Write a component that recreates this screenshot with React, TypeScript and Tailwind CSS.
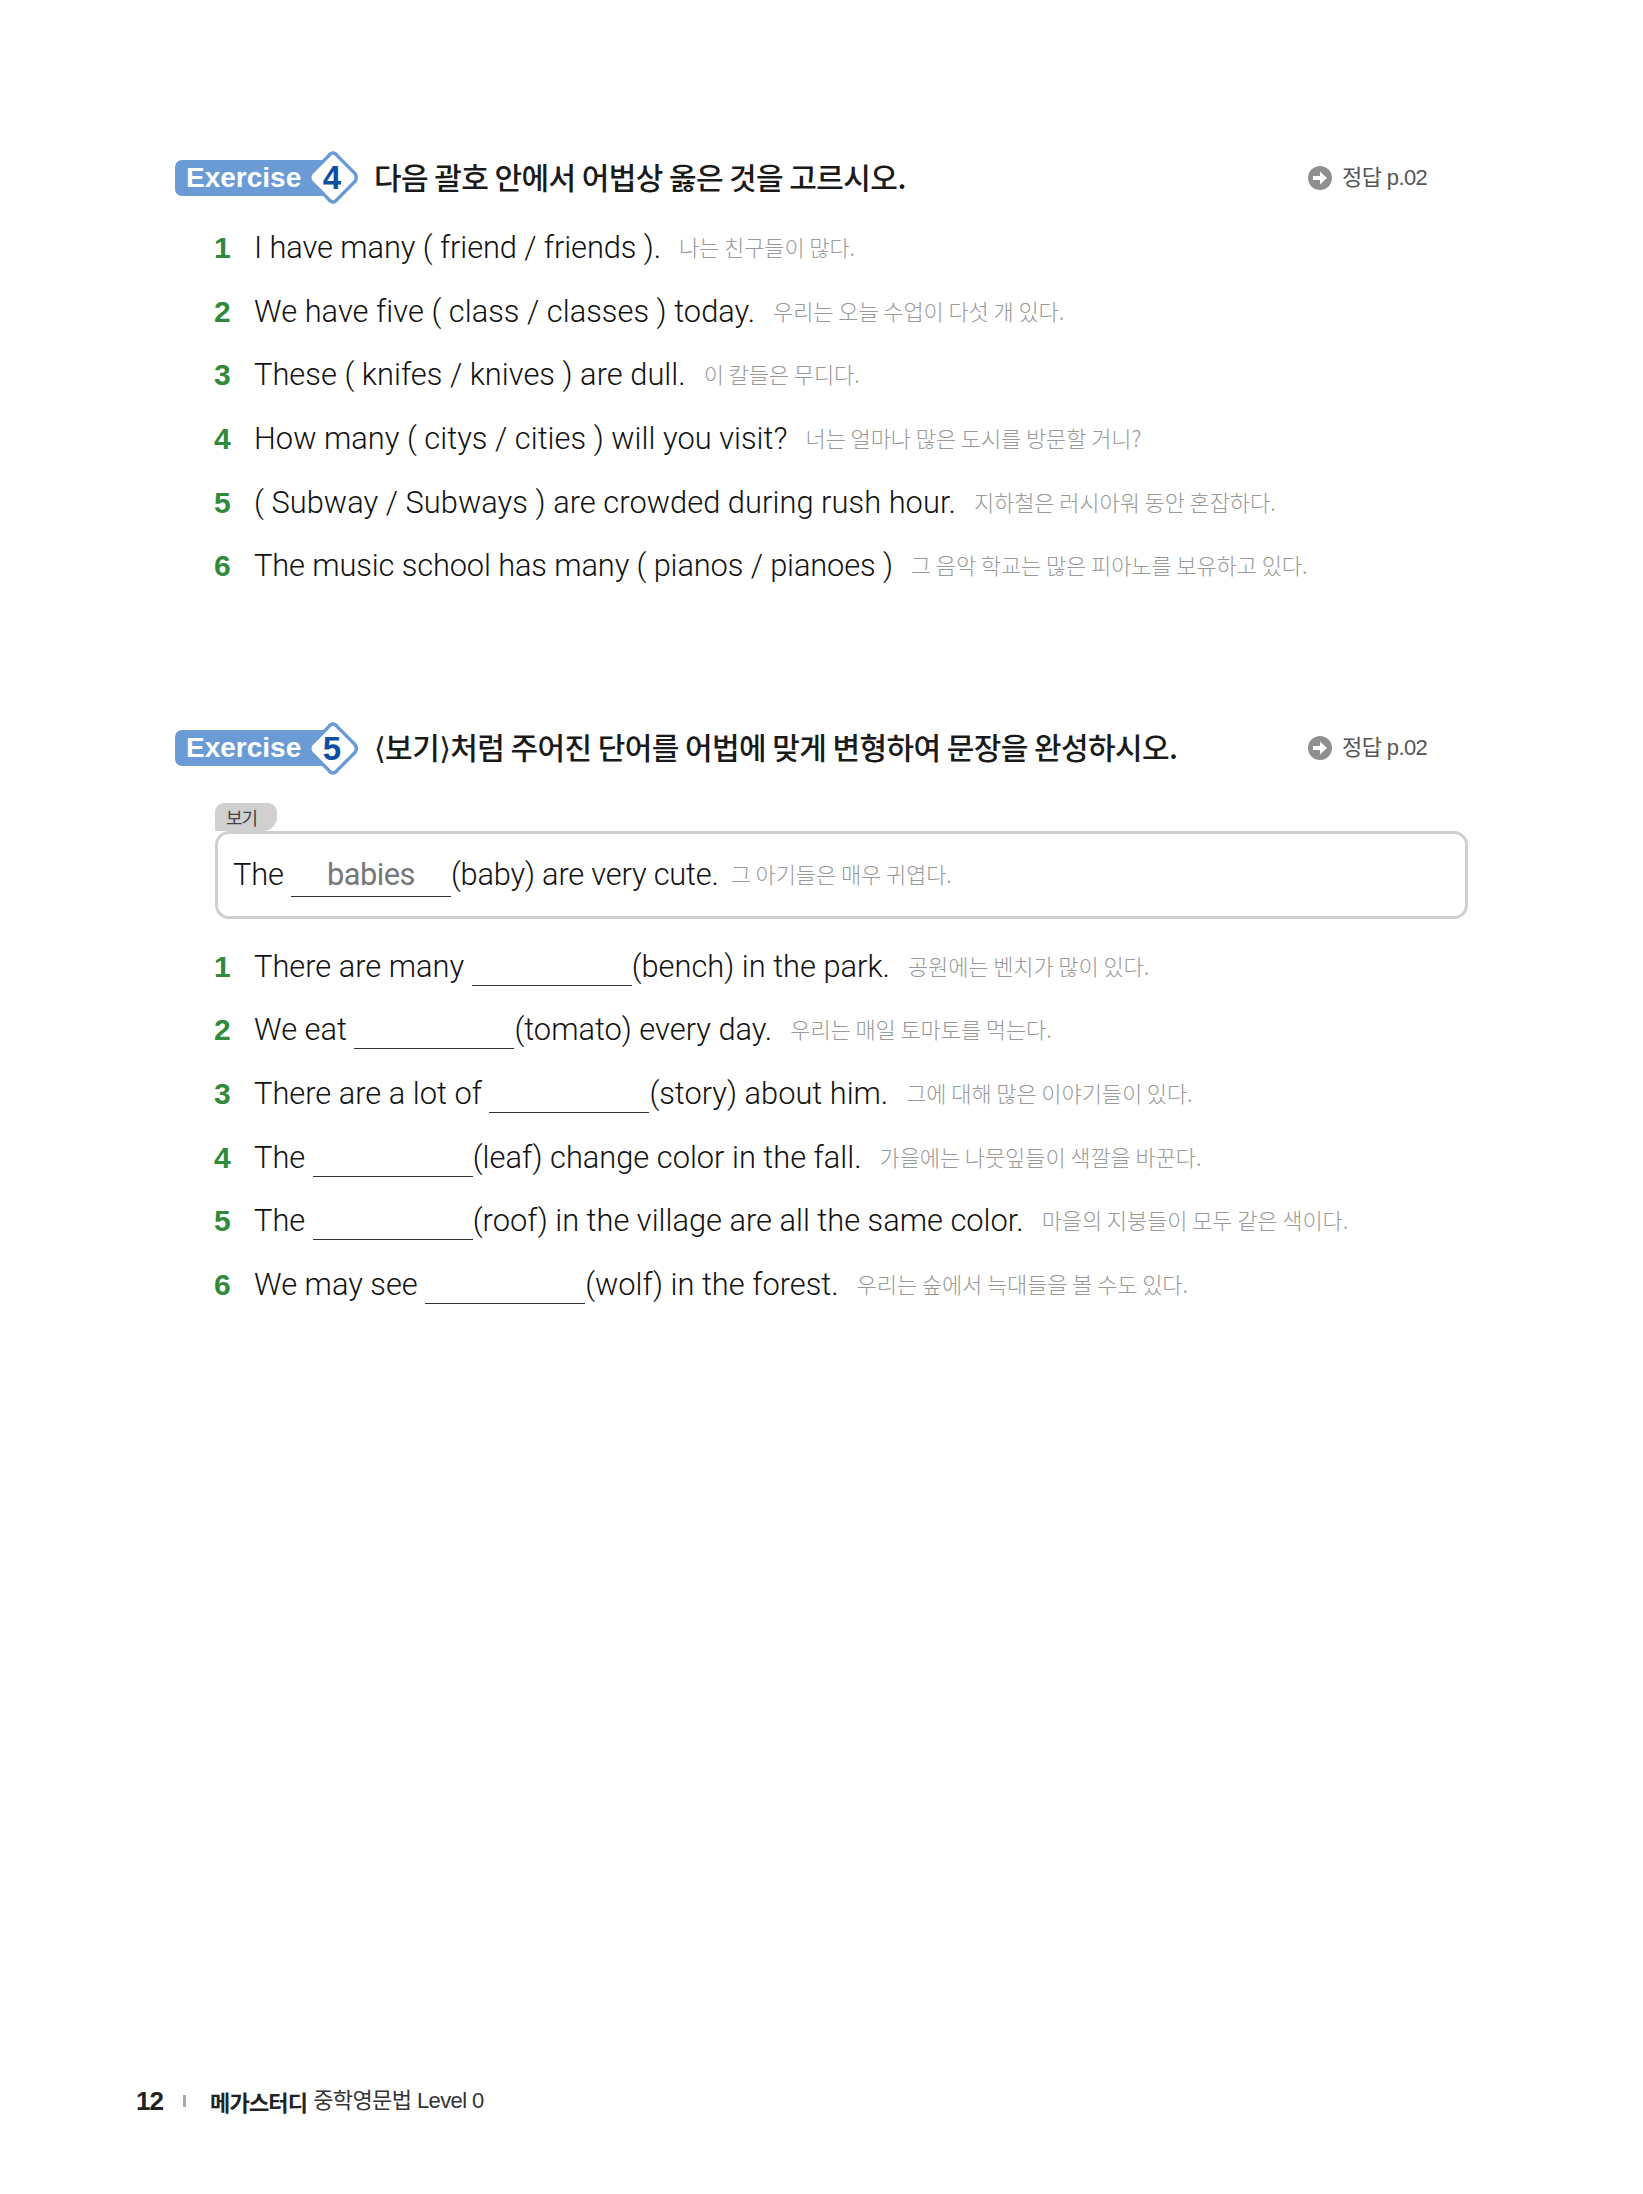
const KO = "font-['Liberation_Sans','Noto_Sans_CJK_KR',sans-serif]";
const TITLE = "font-['Noto_Sans_CJK_KR','DejaVu_Sans',sans-serif]";
const EN = "font-['Roboto',sans-serif] font-light";

function Badge({ n }: { n: string }) {
  return (
    <div className="flex items-center w-[184px] h-[53px] shrink-0">
      <div className="flex items-center w-[150px] h-[36px] bg-[#6a9bd4] rounded-l-[7px] pl-[11px]">
        <span className="font-['Liberation_Sans',sans-serif] font-bold text-[28px] leading-none text-white">Exercise</span>
      </div>
      <div className="relative w-[52px] h-[53px] -ml-[18px] flex items-center justify-center">
        <svg viewBox="0 0 52 53" className="absolute inset-0 w-[52px] h-[53px]">
          <path d="M26 2 Q28.5 2 30.5 5 L48 22.5 Q50.5 26.5 48 30.5 L30.5 48 Q28.5 51 26 51 Q23.5 51 21.5 48 L4 30.5 Q1.5 26.5 4 22.5 L21.5 5 Q23.5 2 26 2 Z" fill="#ffffff" stroke="#6a9bd4" strokeWidth="3.5" />
        </svg>
        <span className="relative -translate-x-[1px] font-['Liberation_Sans',sans-serif] font-bold text-[33px] leading-none text-[#0d4ea3]">{n}</span>
      </div>
    </div>
  );
}

function Header({ n, title }: { n: string; title: string }) {
  return (
    <div className="flex items-center h-[53px] pl-[175px]">
      <Badge n={n} />
      <div className={`ml-[15px] w-[934px] shrink-0 -translate-y-[2px] text-[30px] leading-none font-medium text-[#1a1a1a] tracking-[-0.58px] ${TITLE}`}>{title}</div>
      <div className="flex items-center">
        <svg viewBox="0 0 24 24" className="w-[24px] h-[24px]">
          <circle cx="12" cy="12" r="12" fill="#8f8f91" />
          <path d="M5 10h7V5.5l7 6.5-7 6.5V14H5z" fill="#ffffff" />
        </svg>
        <span className={`ml-[10px] text-[22px] leading-none text-[#555] tracking-[-0.6px] ${KO}`}>정답 p.02</span>
      </div>
    </div>
  );
}

type Part = string | { blank: true; answer?: string };

function Sentence({ parts, ko, track = "", gap = "ml-[18px]" }: { parts: Part[]; ko: string; track?: string; gap?: string }) {
  return (
    <div className="flex items-baseline">
      <span className={`${EN} text-[30.8px] leading-none text-[#111] whitespace-pre ${track}`}>
        {parts.map((p, i) =>
          typeof p === "string" ? (
            <span key={i}>{p}</span>
          ) : p.answer ? (
            <span key={i} className="inline-block w-[160px] border-b-[1px] border-[#333] pb-[5px] align-baseline text-center text-[#777] font-normal tracking-[-0.5px]">
              {p.answer}
            </span>
          ) : (
            <span key={i} className="inline-block w-[160px] border-b-[1px] border-[#333] h-[34px] align-[-9px]" />
          )
        )}
      </span>
      <span className={`${gap} -translate-y-[2px] text-[22px] leading-none text-[#999] tracking-[-0.1px] font-light font-['Noto_Sans_CJK_KR',sans-serif]`}>{ko}</span>
    </div>
  );
}

function Row({ num, parts, ko, track }: { num: number; parts: Part[]; ko: string; track?: string }) {
  return (
    <div className="flex items-baseline h-[63.65px] pl-[214px] pt-[14px]">
      <span className="w-[40px] font-['Liberation_Sans',sans-serif] font-bold text-[30px] leading-none text-[#2f8a3a]">{num}</span>
      <Sentence parts={parts} ko={ko} track={track} />
    </div>
  );
}

const B: Part = { blank: true };

const first: { parts: Part[]; ko: string; track?: string }[] = [
  { parts: ["I have many ( friend / friends )."], ko: "나는 친구들이 많다.", track: "tracking-[-0.09px]" },
  { parts: ["We have five ( class / classes ) today."], ko: "우리는 오늘 수업이 다섯 개 있다.", track: "tracking-[0.03px]" },
  { parts: ["These ( knifes / knives ) are dull."], ko: "이 칼들은 무디다.", track: "tracking-[0.03px]" },
  { parts: ["How many ( citys / cities ) will you visit?"], ko: "너는 얼마나 많은 도시를 방문할 거니?", track: "tracking-[0.03px]" },
  { parts: ["( Subway / Subways ) are crowded during rush hour."], ko: "지하철은 러시아워 동안 혼잡하다.", track: "tracking-[0.05px]" },
  { parts: ["The music school has many ( pianos / pianoes )"], ko: "그 음악 학교는 많은 피아노를 보유하고 있다.", track: "tracking-[-0.12px]" },
];

const second: { parts: Part[]; ko: string; track?: string }[] = [
  { parts: ["There are many ", B, "(bench) in the park."], ko: "공원에는 벤치가 많이 있다." },
  { parts: ["We eat ", B, "(tomato) every day."], ko: "우리는 매일 토마토를 먹는다." },
  { parts: ["There are a lot of ", B, "(story) about him."], ko: "그에 대해 많은 이야기들이 있다." },
  { parts: ["The ", B, "(leaf) change color in the fall."], ko: "가을에는 나뭇잎들이 색깔을 바꾼다." },
  { parts: ["The ", B, "(roof) in the village are all the same color."], ko: "마을의 지붕들이 모두 같은 색이다." },
  { parts: ["We may see ", B, "(wolf) in the forest."], ko: "우리는 숲에서 늑대들을 볼 수도 있다." },
];

export default function App() {
  return (
    <div className="flex flex-col w-[1643px] h-[2194px] bg-white pt-[151px] pb-[77px] overflow-hidden">
      <Header n="4" title="다음 괄호 안에서 어법상 옳은 것을 고르시오." />
      <div className="mt-[15px]">
        {first.map((r, i) => (
          <Row key={i} num={i + 1} parts={r.parts} ko={r.ko} track={r.track} />
        ))}
      </div>

      <div className="mt-[121px]">
        <Header n="5" title="⟨보기⟩처럼 주어진 단어를 어법에 맞게 변형하여 문장을 완성하시오." />
      </div>

      <div className="mt-[28px] ml-[215px] w-[1253px]">
        <div className="flex items-end h-[28px]">
          <div className={`w-[62px] h-[28px] bg-[#d0d0d0] rounded-t-[9px] rounded-br-[14px] pl-[11px] pt-[3px] text-[18px] leading-[22px] text-[#444] tracking-[-1px] ${TITLE}`}>보기</div>
        </div>
        <div className="h-[88px] border-[3px] border-[#d0d0d0] rounded-[14px] pl-[15px] pt-[26px]">
          <Sentence parts={["The ", { blank: true, answer: "babies" }, "(baby) are very cute."]} ko="그 아기들은 매우 귀엽다." track="tracking-[-0.2px]" gap="ml-[12px]" />
        </div>
      </div>

      <div className="mt-[19px]">
        {second.map((r, i) => (
          <Row key={i} num={i + 1} parts={r.parts} ko={r.ko} track={r.track} />
        ))}
      </div>

      <div className="mt-auto ml-[136px] flex items-center h-[32px]">
        <span className="font-['Liberation_Sans',sans-serif] font-bold text-[26px] leading-none text-[#222] tracking-[-1px] w-[47px]">12</span>
        <span className="w-[3px] h-[12px] bg-[#aaa]" />
        <span className={`ml-[24px] text-[22px] leading-none font-bold text-[#222] tracking-[-0.8px] ${TITLE}`}>메가스터디</span>
        <span className={`ml-[6px] text-[22px] leading-none text-[#333] tracking-[-0.6px] ${KO}`}>중학영문법 Level 0</span>
      </div>
    </div>
  );
}
